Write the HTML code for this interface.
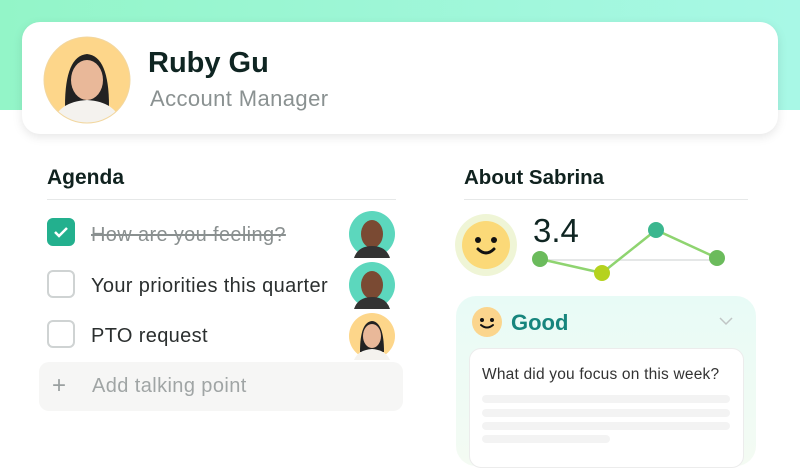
<!DOCTYPE html>
<html><head><style>
*{margin:0;padding:0;box-sizing:border-box}
body{width:800px;height:450px;overflow:hidden;background:#fff;font-family:"Liberation Sans",sans-serif;position:relative}
.top{position:absolute;left:0;top:0;width:800px;height:110px;background:linear-gradient(90deg,#93f5c8,#a8f8e6)}
.card{position:absolute;left:22px;top:22px;width:756px;height:112px;background:#fff;border-radius:18px;box-shadow:0 3px 10px rgba(0,0,0,.1)}
.abs{position:absolute}
.h{font-size:21px;font-weight:bold;color:#10221f}
.line{position:absolute;height:1px;background:#e6e8e8}
.cb{position:absolute;left:47px;width:28px;height:28px;border:2px solid #cfd3d3;border-radius:6px}
.item{position:absolute;left:91px;font-size:20px;letter-spacing:0.35px;color:#2b2f2f}
</style></head><body>
<div class="top"></div>
<div class="card">
 <svg class="abs" style="left:21px;top:14px" width="88" height="88" viewBox="0 0 88 88"><defs><clipPath id="c"><circle cx="44" cy="44" r="43"/></clipPath></defs><g clip-path="url(#c)"><rect width="88" height="88" fill="#fdd68a"/><path d="M22 70 Q22 20 44 18 Q66 20 66 70Z" fill="#222"/><ellipse cx="44" cy="44" rx="16" ry="20" fill="#e9b899"/><path d="M10 88 Q14 66 44 64 Q74 66 78 88Z" fill="#f4f2ee"/></g><circle cx="44" cy="44" r="43" fill="none" stroke="#f2d7a0"/></svg>
 <div class="abs" style="left:126px;top:25px;font-size:29px;font-weight:bold;color:#0f2522">Ruby Gu</div>
 <div class="abs" style="left:128px;top:64px;font-size:22px;letter-spacing:0.4px;color:#8a9191">Account Manager</div>
</div>
<div class="abs h" style="left:47px;top:166px">Agenda</div>
<div class="line" style="left:47px;top:199px;width:349px"></div>
<div class="abs h" style="left:464px;top:166px;font-size:20.5px">About Sabrina</div>
<div class="line" style="left:464px;top:199px;width:284px"></div>

<div class="cb" style="top:218px;background:#23b08e;border-color:#23b08e"><svg width="24" height="24" viewBox="0 0 24 24"><path d="M6 12l4 4 8-8" stroke="#fff" stroke-width="2.5" fill="none"/></svg></div>
<div class="item" style="top:224px;color:#8a9090;text-decoration:line-through">How are you feeling?</div>
<div class="cb" style="top:270px"></div>
<div class="item" style="top:275px">Your priorities this quarter</div>
<div class="cb" style="top:320px"></div>
<div class="item" style="top:325px">PTO request</div>
<svg class="abs" style="left:348px;top:210px" width="48" height="48"><circle cx="24" cy="24" r="23" fill="#5cd7bd"/><ellipse cx="24" cy="24" rx="11" ry="14" fill="#7a4a33"/><path d="M6 48Q10 36 24 36Q38 36 42 48Z" fill="#333"/></svg>
<svg class="abs" style="left:348px;top:261px" width="48" height="48"><circle cx="24" cy="24" r="23" fill="#5cd7bd"/><ellipse cx="24" cy="24" rx="11" ry="14" fill="#7a4a33"/><path d="M6 48Q10 36 24 36Q38 36 42 48Z" fill="#333"/></svg>
<svg class="abs" style="left:348px;top:312px" width="48" height="48"><circle cx="24" cy="24" r="23" fill="#fdd68a"/><path d="M12 40Q12 10 24 9Q36 10 36 40Z" fill="#222"/><ellipse cx="24" cy="24" rx="9" ry="12" fill="#e9b899"/><path d="M6 48Q10 38 24 37Q38 38 42 48Z" fill="#f4f2ee"/></svg>
<div class="abs" style="left:39px;top:362px;width:364px;height:49px;background:#f6f6f5;border-radius:10px"></div>
<div class="abs" style="left:52px;top:372px;font-size:24px;color:#9aa0a0">+</div>
<div class="abs" style="left:92px;top:375px;font-size:20px;letter-spacing:0.4px;color:#a0a5a5">Add talking point</div>

<svg class="abs" style="left:455px;top:214px" width="300" height="80"><circle cx="31" cy="31" r="31" fill="#eff5d6"/><circle cx="31" cy="31" r="24" fill="#fbd978"/><circle cx="23" cy="26" r="3" fill="#111"/><circle cx="39" cy="26" r="3" fill="#111"/><path d="M23 35Q31 43 39 35" stroke="#111" stroke-width="3" fill="none" stroke-linecap="round"/>
<line x1="85" y1="46" x2="262" y2="46" stroke="#e5e7e7" stroke-width="2"/>
<polyline points="85,45 147,59 201,16 262,44" fill="none" stroke="#8fd470" stroke-width="2.5"/>
<circle cx="85" cy="45" r="8" fill="#6bbb5c"/><circle cx="147" cy="59" r="8" fill="#b5d21e"/><circle cx="201" cy="16" r="8" fill="#3bb78f"/><circle cx="262" cy="44" r="8" fill="#6bbb5c"/></svg>
<div class="abs" style="left:533px;top:212px;font-size:33px;color:#0f2522">3.4</div>

<div class="abs" style="left:456px;top:296px;width:300px;height:170px;border-radius:20px;background:linear-gradient(180deg,#e8fbf6,#f4fbf3)"></div>
<svg class="abs" style="left:471px;top:306px" width="32" height="32"><circle cx="16" cy="16" r="15" fill="#fbd58d"/><circle cx="11" cy="14" r="2" fill="#111"/><circle cx="21" cy="14" r="2" fill="#111"/><path d="M10 19Q16 24 22 19" stroke="#111" stroke-width="2" fill="none" stroke-linecap="round"/></svg>
<div class="abs" style="left:511px;top:310px;font-size:22px;font-weight:bold;color:#17857d">Good</div>
<svg class="abs" style="left:718px;top:316px" width="16" height="10"><path d="M2 2l6 6 6-6" stroke="#c0c5c5" stroke-width="1.5" fill="none"/></svg>
<div class="abs" style="left:469px;top:348px;width:275px;height:120px;background:#fff;border-radius:12px;border:1px solid #ececec"></div>
<div class="abs" style="left:482px;top:366px;font-size:15.5px;letter-spacing:0.2px;color:#333">What did you focus on this week?</div>
<div class="abs" style="left:482px;top:395px;width:248px;height:8px;border-radius:4px;background:#f3f3f3"></div>
<div class="abs" style="left:482px;top:409px;width:248px;height:8px;border-radius:4px;background:#f3f3f3"></div>
<div class="abs" style="left:482px;top:422px;width:248px;height:8px;border-radius:4px;background:#f3f3f3"></div>
<div class="abs" style="left:482px;top:435px;width:128px;height:8px;border-radius:4px;background:#f3f3f3"></div>
</body></html>
